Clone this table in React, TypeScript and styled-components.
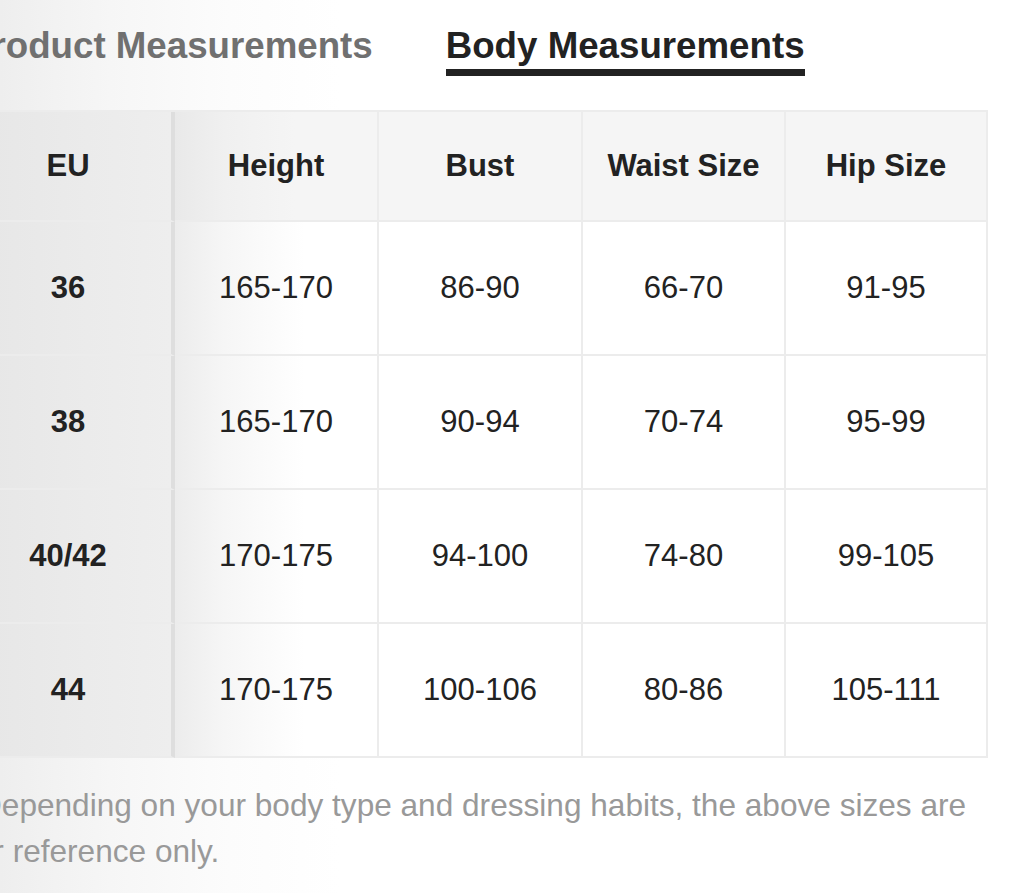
import React from "react";
import styled, { createGlobalStyle } from "styled-components";

const Global = createGlobalStyle`
  html, body {
    margin: 0;
    padding: 0;
  }
  body {
    width: 1024px;
    height: 893px;
    overflow: hidden;
    font-family: "Liberation Sans", Arial, sans-serif;
    background:
      linear-gradient(90deg, #eeeeee 0px, #f6f6f6 110px, #fcfcfc 230px, #ffffff 340px);
  }
`;

const Page = styled.div`
  margin-left: -33px;
  width: 1021px;
  padding-top: 25px;
`;

const Tabs = styled.div`
  display: flex;
  gap: 73px;
`;

const Tab = styled.div<{ $active?: boolean }>`
  font-size: 36.7px;
  line-height: 42px;
  font-weight: 700;
  color: ${(p) => (p.$active ? "#222222" : "#707070")};
  padding-bottom: 2px;
  border-bottom: 7px solid ${(p) => (p.$active ? "#222222" : "transparent")};
  white-space: nowrap;
`;

const Table = styled.div`
  margin-top: 34px;
  display: grid;
  grid-template-columns: 208px 204px 204px 203px 202px;
  border-top: 2px solid #ececec;
`;

const Cell = styled.div<{ $head?: boolean; $first?: boolean; $second?: boolean }>`
  height: ${(p) => (p.$head ? "108px" : "132px")};
  display: flex;
  align-items: center;
  justify-content: center;
  font-size: 31px;
  color: #222222;
  font-weight: ${(p) => (p.$head || p.$first ? 700 : 400)};
  border-bottom: 2px solid #ececec;
  border-right: ${(p) => (p.$first ? "4px solid #dedede" : "2px solid #ececec")};
  padding-right: ${(p) => (p.$first ? "2px" : "0")};
  box-sizing: content-box;
  background: ${(p) =>
    p.$first
      ? "linear-gradient(90deg, #e6e6e6 0px, #ebebeb 120px, #eeeeee 100%)"
      : p.$second
      ? p.$head
        ? "linear-gradient(90deg, #e9e9e9 0px, #f0f0f0 50px, #f5f5f5 120px)"
        : "linear-gradient(90deg, #ececec 0px, #f6f6f6 50px, #ffffff 130px)"
      : p.$head
      ? "#f5f5f5"
      : "#ffffff"};
`;

const Note = styled.p`
  margin: 24px 0 0;
  font-size: 31.6px;
  line-height: 46px;
  color: #999999;
  text-indent: 12px;
`;

const headers = ["EU", "Height", "Bust", "Waist Size", "Hip Size"];
const rows = [
  ["36", "165-170", "86-90", "66-70", "91-95"],
  ["38", "165-170", "90-94", "70-74", "95-99"],
  ["40/42", "170-175", "94-100", "74-80", "99-105"],
  ["44", "170-175", "100-106", "80-86", "105-111"],
];

export default function App() {
  return (
    <>
      <Global />
      <Page>
        <Tabs>
          <Tab>Product Measurements</Tab>
          <Tab $active>Body Measurements</Tab>
        </Tabs>
        <Table>
          {headers.map((h, i) => (
            <Cell key={h} $head $first={i === 0} $second={i === 1}>
              {h}
            </Cell>
          ))}
          {rows.map((r, ri) =>
            r.map((v, i) => (
              <Cell key={`${ri}-${i}`} $first={i === 0} $second={i === 1}>
                {v}
              </Cell>
            ))
          )}
        </Table>
        <Note>
          Depending on your body type and dressing habits, the above sizes are for reference only.
        </Note>
      </Page>
    </>
  );
}
